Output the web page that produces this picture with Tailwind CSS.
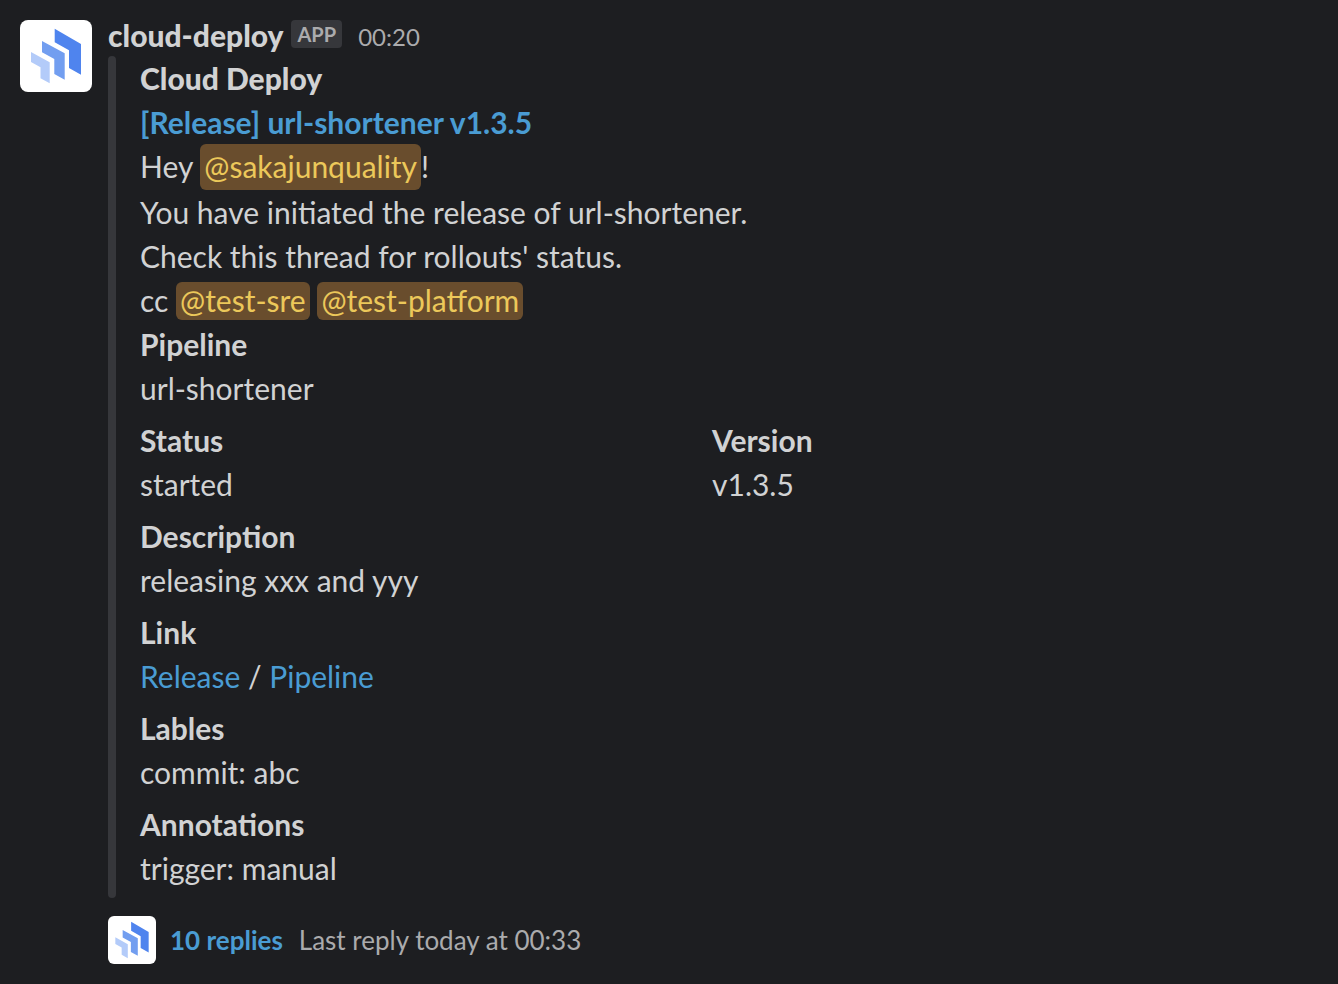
<!DOCTYPE html>
<html lang="en">
<head>
<meta charset="utf-8">
<meta name="viewport" content="width=device-width, initial-scale=1">
<title>cloud-deploy</title>
<script src="https://cdn.jsdelivr.net/npm/@tailwindcss/browser@4"></script>
</head>
<body class="min-h-screen bg-[#1d1e21] text-[30px] leading-[44px] text-[#d1d2d3] font-['Lato',sans-serif]">
<svg class="hidden" aria-hidden="true">
  <symbol id="logo" viewBox="0 0 72 72">
    <path fill="#4f84ee" d="M34.7 8.8 61 24v30.7L49 48V30.3L34.7 22.3z"/>
    <path fill="#729ef0" d="M22 21 44.7 33.2v26.5L34.3 54V39L22 32.3z"/>
    <path fill="#b3cbf9" d="M11 32 29.7 42.3V63.3L20.5 58.3V47.3L11 42z"/>
  </symbol>
</svg>
<main class="flex gap-4 px-5 pt-5 pb-5">
  <div class="size-[72px] shrink-0 rounded-lg bg-white"><svg class="size-full" role="img" aria-label="cloud-deploy"><use href="#logo"/></svg></div>
  <article class="min-w-0 flex-1">
    <header class="-mt-1 flex h-10 items-center">
      <h1 class="mb-0.5 font-['Lato_Black','Lato',sans-serif] font-black">cloud-deploy</h1>
      <span class="ml-2 mb-1 h-7 rounded-sm bg-[#36373b] px-1.5 text-[20px] leading-7 font-bold text-[#ababad]">APP</span>
      <time class="ml-4 mt-0.5 text-[24px] text-[#ababad]">00:20</time>
    </header>
    <section class="flex gap-6">
      <div class="w-2 shrink-0 rounded-full bg-[#36373b]"></div>
      <div class="min-w-0 flex-1 pb-2">
        <h2 class="font-['Lato_Black','Lato',sans-serif] font-black">Cloud Deploy</h2>
        <a href="#release" class="block font-bold text-[#4a9cd3]">[Release] url-shortener v1.3.5</a>
        <p class="h-[46px]">Hey <a href="#user" class="-mt-px inline-block rounded-md bg-[#694d2d] px-1 pb-0.5 text-[#ecc85a]">@sakajunquality</a>!</p>
        <p>You have initiated the release of url-shortener.</p>
        <p>Check this thread for rollouts' status.</p>
        <p>cc <a href="#sre" class="rounded-md bg-[#694d2d] px-1 pb-0.5 text-[#ecc85a]">@test-sre</a> <a href="#platform" class="rounded-md bg-[#694d2d] px-1 pb-0.5 text-[#ecc85a]">@test-platform</a></p>
        <dl class="flex flex-col gap-2">
          <div><dt class="font-bold">Pipeline</dt><dd>url-shortener</dd></div>
          <div class="grid grid-cols-2 gap-x-4 max-w-[1128px]">
            <div><dt class="font-bold">Status</dt><dd>started</dd></div>
            <div><dt class="font-bold">Version</dt><dd>v1.3.5</dd></div>
          </div>
          <div><dt class="font-bold">Description</dt><dd>releasing xxx and yyy</dd></div>
          <div><dt class="font-bold">Link</dt><dd><a href="#release" class="text-[#4a9cd3]">Release</a> / <a href="#pipeline" class="text-[#4a9cd3]">Pipeline</a></dd></div>
          <div><dt class="font-bold">Lables</dt><dd>commit: abc</dd></div>
          <div><dt class="font-bold">Annotations</dt><dd>trigger: manual</dd></div>
        </dl>
      </div>
    </section>
    <footer class="mt-[18px] flex items-center text-[26px]">
      <div class="size-12 rounded-md bg-white"><svg class="size-full" aria-hidden="true"><use href="#logo"/></svg></div>
      <a href="#thread" class="ml-3.5 font-bold text-[#4a9cd3]">10 replies</a>
      <span class="ml-4 text-[#ababad]">Last reply today at 00:33</span>
    </footer>
  </article>
</main>
</body>
</html>
